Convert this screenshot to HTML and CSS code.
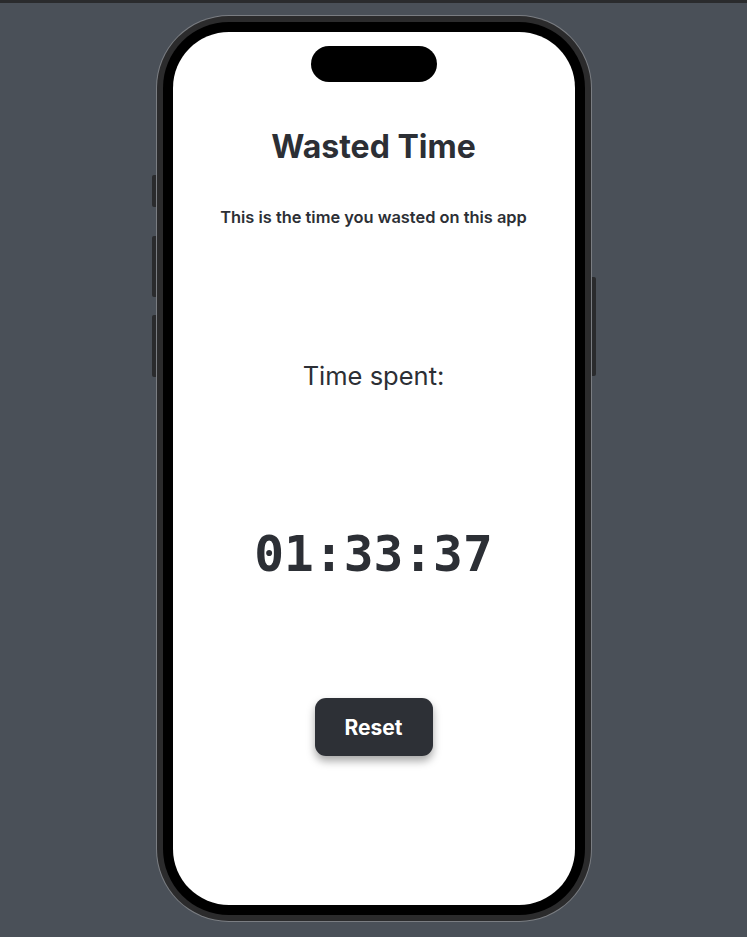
FILE: index.html
```html
<!DOCTYPE html>
<html lang="en">
<head>
<meta charset="utf-8">
<title>Wasted Time</title>
<link rel="stylesheet" href="styles.css">
</head>
<body>
<div class="top-bar"></div>
<div class="stage">
  <div class="phone">
    <span class="side-btn side-left btn-action"></span>
    <span class="side-btn side-left btn-vol-up"></span>
    <span class="side-btn side-left btn-vol-down"></span>
    <span class="side-btn side-right btn-power"></span>
    <div class="bezel">
      <div class="screen">
        <div class="island"></div>
        <h1 class="title">Wasted Time</h1>
        <p class="subtitle">This is the time you wasted on this app</p>
        <p class="label">Time spent:</p>
        <p class="timer">01:33:37</p>
        <button class="reset">Reset</button>
      </div>
    </div>
  </div>
</div>
</body>
</html>
```
FILE: styles.css
```css
html, body {
  margin: 0;
  padding: 0;
}
body {
  background: #4a5058;
  height: 937px;
  overflow: hidden;
  font-family: Inter, "Noto Sans", "Liberation Sans", sans-serif;
}
.top-bar {
  height: 3px;
  background: #2a2b2d;
}
.stage {
  display: flex;
  justify-content: center;
  padding-top: 13px;
}
.phone {
  position: relative;
  width: 434px;
  height: 905px;
  box-sizing: border-box;
  padding: 6px;
  border-radius: 72px;
  background: #2b2b2c;
  box-shadow: 0 0 0 1px #7a7d82;
}
.side-btn {
  position: absolute;
  width: 4px;
  background: #2a2b2d;
}
.side-left { left: -5px; border-radius: 2px 0 0 2px; }
.side-right { right: -5px; border-radius: 0 2px 2px 0; }
.btn-action { top: 159px; height: 32px; }
.btn-vol-up { top: 220px; height: 61px; }
.btn-vol-down { top: 299px; height: 62px; }
.btn-power { top: 261px; height: 99px; }
.bezel {
  height: 100%;
  box-sizing: border-box;
  padding: 10px;
  background: #000;
  border-radius: 66px;
}
.screen {
  height: 100%;
  background: #fff;
  border-radius: 56px;
  display: flex;
  flex-direction: column;
  align-items: center;
  color: #2c2f35;
}
.island {
  margin-top: 14px;
  width: 126px;
  height: 36px;
  border-radius: 18px;
  background: #000;
}
.title {
  margin: 48px 0 0;
  font-size: 32px;
  line-height: 34px;
  font-weight: 700;
}
.subtitle {
  margin: 45px 0 0;
  font-size: 16.4px;
  line-height: 16px;
  font-weight: 600;
}
.label {
  margin: 137px 0 0;
  font-size: 25.5px;
  line-height: 27px;
  font-weight: 400;
}
.timer {
  margin: 140px 0 0;
  font-family: "DejaVu Sans Mono", "Liberation Mono", monospace;
  font-size: 49.5px;
  line-height: 50px;
  font-weight: 700;
}
.reset {
  margin-top: 119px;
  width: 118px;
  height: 58px;
  border: none;
  border-radius: 11px;
  background: #2d3036;
  color: #fff;
  font-family: Inter, "Noto Sans", "Liberation Sans", sans-serif;
  font-size: 21px;
  font-weight: 700;
  box-shadow: 0 5px 9px rgba(0, 0, 0, 0.35);
}
```
